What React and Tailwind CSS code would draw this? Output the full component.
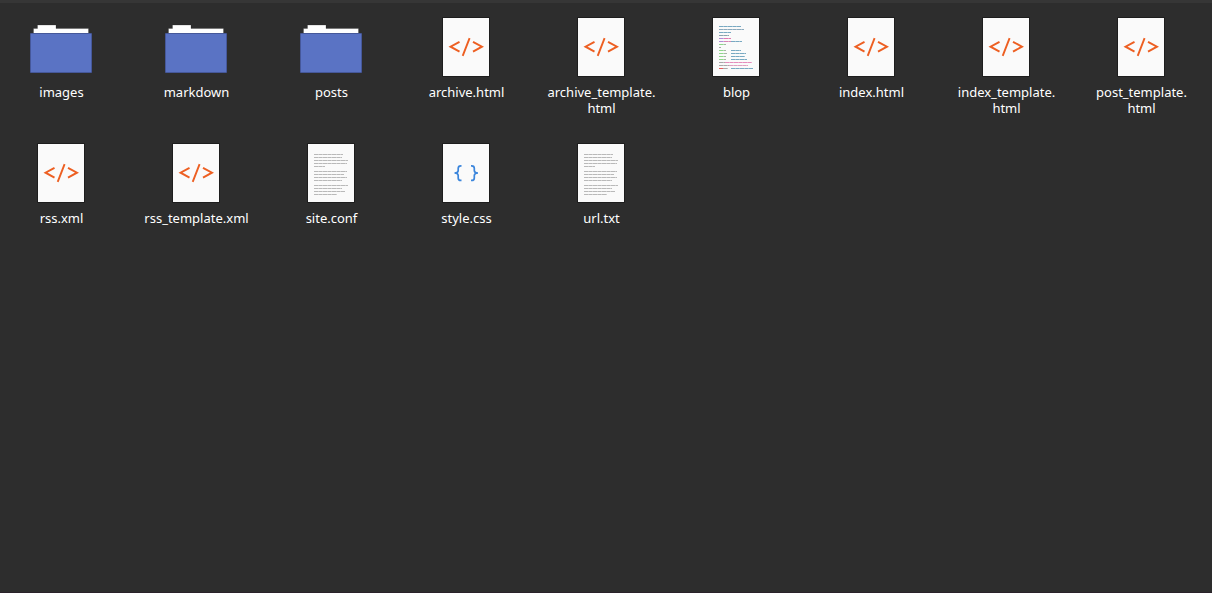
const items = [
  ['folder', 'images'],
  ['folder', 'markdown'],
  ['folder', 'posts'],
  ['markup', 'archive.html'],
  ['markup', 'archive_template.html'],
  ['script', 'blop'],
  ['markup', 'index.html'],
  ['markup', 'index_template.html'],
  ['markup', 'post_template.html'],
  ['markup', 'rss.xml'],
  ['markup', 'rss_template.xml'],
  ['text', 'site.conf'],
  ['css', 'style.css'],
  ['text', 'url.txt'],
];

// Each text line: [y, width], starting at x = 15 in the 64px icon box.
const textLines = [
  [12, 29], [15, 28], [18, 34], [21, 33], [24, 11],
  [29, 33], [32, 30], [35, 33], [38, 28],
  [43, 34], [46, 28], [49, 31], [52, 23],
];

// Coloured code runs: [y, x offset, width, colour].
const codeRuns = [
  [10, 0, 22, '#78a9c2'], [13, 0, 25, '#8baabd'], [16, 0, 12, '#78a9c2'], [19, 0, 10, '#8ba2ad'],
  [22, 0, 5, '#b18ad4'], [22, 5, 7, '#e07ab0'],
  [25, 0, 5, '#b18ad4'], [25, 5, 7, '#d884b4'], [25, 12, 11, '#78a9c2'],
  [28, 0, 5, '#8fd68c'], [28, 5, 2, '#a5b5a5'],
  [31, 0, 2, '#a8a8a8'],
  [34, 0, 5, '#8fd68c'], [34, 5, 2, '#a5b5a5'], [34, 12, 10, '#78a9c2'],
  [37, 0, 5, '#8fd68c'], [37, 5, 3, '#a5b5a5'], [37, 12, 15, '#78a9c2'],
  [40, 0, 5, '#8fd68c'], [40, 5, 2, '#a5b5a5'], [40, 12, 14, '#78a9c2'],
  [43, 0, 5, '#8fd68c'], [43, 5, 2, '#a5b5a5'], [43, 12, 16, '#78a9c2'],
  [46, 0, 6, '#a8a8a8'], [46, 6, 27, '#e58cbc'],
  [49, 0, 10, '#a8a8a8'], [49, 10, 19, '#e0a0c0'],
  [52, 0, 4, '#ea5a5a'], [52, 4, 5, '#a8a8a8'], [52, 12, 22, '#78a9c2'],
];

function Folder() {
  return (
    <>
      <path d="M4.500 17V10.500h4V7h18.500v3.500h32.500v6.500z" fill="#fff" stroke="#242424" strokeOpacity=".4" strokeWidth=".6" />
      <rect x="1" y="15" width="62" height="40" rx="1" fill="#46589a" />
      <rect x="2" y="16" width="60" height="38" fill="#5a73c4" />
    </>
  );
}

function Page({ kind }) {
  return (
    <>
      <rect x="8" y="-1" width="48" height="60" rx="1" fill="#1d1d1d" />
      <rect x="9" y="0" width="46" height="58" fill="#fafafa" />
      {kind === 'markup' && (
        <path
          d="M25.500 23.800L16.500 28.700L25.500 33.600M35.600 20.200L28.700 37.800M39 23.800L48 28.700L39 33.600"
          fill="none"
          stroke="#ed5f22"
          strokeWidth="1.900"
        />
      )}
      {kind === 'css' && (
        <path
          d="M27.500 21.800H26.800Q24.200 21.800 24.200 24.300V26.500Q24.200 29 20.500 29Q24.200 29 24.200 31.500V33.900Q24.200 36.400 26.800 36.400H27.500M37 21.800H37.700Q40.300 21.800 40.300 24.300V26.500Q40.300 29 44 29Q40.300 29 40.300 31.500V33.900Q40.300 36.400 37.700 36.400H37"
          fill="none"
          stroke="#3c86dc"
          strokeWidth="1.700"
        />
      )}
      {kind === 'text' &&
        textLines.map(([y, width]) => (
          <g key={y} stroke="#b9b9b9">
            <path d={`M15 ${y - 1.5}h${width}`} opacity=".65" />
            <path d={`M15 ${y - 1.5}h${width}`} strokeDasharray="4 1 3 1" />
          </g>
        ))}
      {kind === 'script' &&
        codeRuns.map(([y, x, width, color]) => (
          <g key={`${y}-${x}`} stroke={color}>
            <path d={`M${15 + x} ${y - 1.5}h${width}`} opacity=".7" />
            <path d={`M${15 + x} ${y - 1.5}h${width}`} strokeDasharray="4 1 3 1" />
          </g>
        ))}
    </>
  );
}

function FileItem({ kind, name }) {
  const parts = name.split('.');
  return (
    <li>
      <button type="button" className="flex w-full flex-col items-center gap-2">
        <svg className="h-[58px] w-16 overflow-visible" viewBox="0 0 64 58" aria-hidden="true">
          {kind === 'folder' ? <Folder /> : <Page kind={kind} />}
        </svg>
        <span className="w-full pl-0.5 text-center text-[13px] leading-4">
          {parts[0]}
          {parts[1] && <>.<wbr />{parts[1]}</>}
        </span>
      </button>
    </li>
  );
}

export default function App() {
  return (
    <main className="min-h-screen border-t-3 border-b border-t-[#363636] border-b-[#2a222a] bg-[#2d2d2d] font-['Noto_Sans',sans-serif] text-white">
      <ul className="grid grid-cols-[repeat(auto-fill,119px)] gap-x-4 gap-y-7 pt-[15px] pl-px">
        {items.map(([kind, name]) => (
          <FileItem key={name} kind={kind} name={name} />
        ))}
      </ul>
    </main>
  );
}
